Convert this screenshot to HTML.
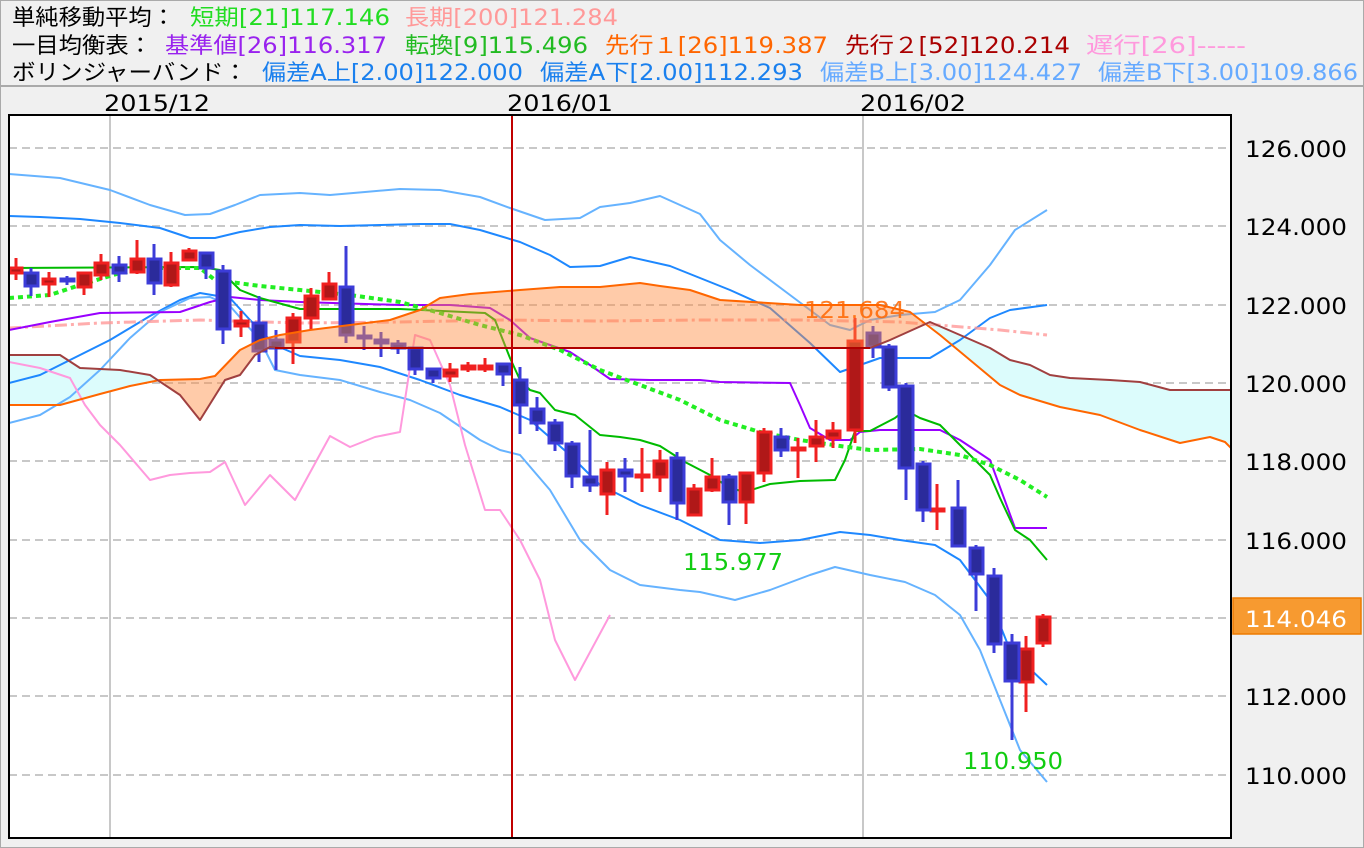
<!DOCTYPE html>
<html><head><meta charset="utf-8"><style>
html,body{margin:0;padding:0;background:#f0f0f0}
svg{display:block}
text{font-family:"DejaVu Sans","Liberation Sans","Noto Sans CJK JP",sans-serif}
</style></head><body>
<svg width="1364" height="848" viewBox="0 0 1364 848" xmlns="http://www.w3.org/2000/svg">
<rect x="0" y="0" width="1364" height="848" fill="#f0f0f0"/>
<rect x="0.5" y="0.5" width="1363" height="847" fill="none" stroke="#aaa"/>
<line x1="0" y1="86" x2="1364" y2="86" stroke="#aaa" stroke-width="2"/>
<g font-size="22">
<text x="12" y="25" fill="#000" textLength="163" lengthAdjust="spacingAndGlyphs">単純移動平均：</text>
<text x="190" y="25" fill="#22dd22" textLength="200" lengthAdjust="spacingAndGlyphs">短期[21]117.146</text>
<text x="405" y="25" fill="#ff9999" textLength="213" lengthAdjust="spacingAndGlyphs">長期[200]121.284</text>
<text x="12" y="53" fill="#000" textLength="140" lengthAdjust="spacingAndGlyphs">一目均衡表：</text>
<text x="165" y="53" fill="#9922ee" textLength="222" lengthAdjust="spacingAndGlyphs">基準値[26]116.317</text>
<text x="405" y="53" fill="#22bb22" textLength="183" lengthAdjust="spacingAndGlyphs">転換[9]115.496</text>
<text x="605" y="53" fill="#ff6600" textLength="223" lengthAdjust="spacingAndGlyphs">先行１[26]119.387</text>
<text x="845" y="53" fill="#aa0000" textLength="225" lengthAdjust="spacingAndGlyphs">先行２[52]120.214</text>
<text x="1086" y="53" fill="#ff99dd" textLength="160" lengthAdjust="spacingAndGlyphs">遅行[26]-----</text>
<text x="12" y="80" fill="#000" textLength="235" lengthAdjust="spacingAndGlyphs">ボリンジャーバンド：</text>
<text x="262" y="80" fill="#1a80ee" textLength="261" lengthAdjust="spacingAndGlyphs">偏差A上[2.00]122.000</text>
<text x="540" y="80" fill="#1a80ee" textLength="263" lengthAdjust="spacingAndGlyphs">偏差A下[2.00]112.293</text>
<text x="820" y="80" fill="#66aaff" textLength="262" lengthAdjust="spacingAndGlyphs">偏差B上[3.00]124.427</text>
<text x="1098" y="80" fill="#66aaff" textLength="260" lengthAdjust="spacingAndGlyphs">偏差B下[3.00]109.866</text>
<text x="104" y="111" fill="#000" textLength="106" lengthAdjust="spacingAndGlyphs">2015/12</text>
<text x="507" y="111" fill="#000" textLength="106" lengthAdjust="spacingAndGlyphs">2016/01</text>
<text x="860" y="111" fill="#000" textLength="106" lengthAdjust="spacingAndGlyphs">2016/02</text>
</g>
<rect x="9" y="115" width="1222" height="723" fill="#fff"/>
<defs>
<clipPath id="plot"><rect x="9" y="115" width="1222" height="723"/></clipPath>
<clipPath id="aboveB"><polygon points="9,355 60,355 80,368 120,370 150,375 180,395 200,420 225,380 240,375 255,355 270,347 280,348 600,348 870,348 890,340 930,322 960,335 990,348 1010,360 1030,365 1050,375 1070,378 1110,380 1140,382 1170,390 1231,390 1231,115 9,115"/></clipPath>
<clipPath id="aboveA"><polygon points="9,405 60,405 100,394 130,386 160,380 200,379 215,376 240,350 260,340 280,335 310,330 350,325 390,320 420,310 440,298 470,294 520,290 560,287 600,287 640,283 660,286 690,290 720,300 800,305 880,305 910,312 940,335 970,360 1000,385 1020,395 1060,407 1100,415 1140,430 1180,443 1210,437 1225,442 1231,448 1231,115 9,115"/></clipPath>
</defs>
<g clip-path="url(#plot)">
<g stroke="#c8c8c8" stroke-width="2" stroke-dasharray="8,5">
<line x1="9" y1="148" x2="1231" y2="148"/><line x1="9" y1="226" x2="1231" y2="226"/><line x1="9" y1="305" x2="1231" y2="305"/><line x1="9" y1="383" x2="1231" y2="383"/><line x1="9" y1="461" x2="1231" y2="461"/><line x1="9" y1="540" x2="1231" y2="540"/><line x1="9" y1="618" x2="1231" y2="618"/><line x1="9" y1="696" x2="1231" y2="696"/><line x1="9" y1="775" x2="1231" y2="775"/>
</g>
<line x1="110" y1="115" x2="110" y2="838" stroke="#c8c8c8" stroke-width="2"/>
<line x1="863" y1="115" x2="863" y2="838" stroke="#c8c8c8" stroke-width="2"/>
<!-- cyan cloud (B above A) -->
<polygon clip-path="url(#aboveA)" fill="#dcfcfc" points="9,355 60,355 80,368 120,370 150,375 180,395 200,420 225,380 240,375 255,355 270,347 280,348 600,348 870,348 890,340 930,322 960,335 990,348 1010,360 1030,365 1050,375 1070,378 1110,380 1140,382 1170,390 1231,390 1231,838 9,838"/>
<g fill="none" stroke-linejoin="round">
<polyline stroke="#66b3ff" stroke-width="2" points="9,174 60,178 110,190 150,205 185,215 210,214 235,205 260,195 300,193 330,195 365,192 400,189 440,190 480,197 510,208 545,220 580,218 600,207 630,203 660,196 700,214 720,240 750,265 790,295 830,325 850,330 870,320 900,315 935,312 960,300 990,265 1015,230 1047,210"/>
<polyline stroke="#1e88ff" stroke-width="2" points="9,216 40,217 80,219 120,223 160,228 190,238 215,238 240,232 270,227 300,225 340,226 380,225 420,224 450,224 480,230 520,242 550,255 570,267 600,266 630,257 670,266 700,278 730,290 770,308 810,343 840,372 860,365 880,358 905,358 930,358 960,340 990,318 1010,310 1047,305"/>
<polyline stroke="#1e88ff" stroke-width="2" points="9,383 40,375 80,355 110,340 150,316 180,300 200,293 230,298 250,320 275,345 300,356 340,360 380,367 420,380 460,395 500,407 530,420 570,455 600,485 640,505 680,520 720,540 760,543 800,540 840,532 870,535 900,540 935,545 960,560 990,600 1010,650 1047,685"/>
<polyline stroke="#66b3ff" stroke-width="2" points="9,423 40,415 70,397 100,370 130,338 160,312 190,298 210,297 230,306 260,340 275,370 300,375 340,380 380,392 410,400 440,413 480,440 500,450 520,455 550,490 580,540 610,570 640,585 680,590 700,592 735,600 770,590 810,575 835,567 870,575 905,582 935,595 960,615 980,650 1000,700 1020,750 1047,782"/>
<polyline stroke="#ff99dd" stroke-width="2" points="9,362 40,368 70,378 85,405 100,425 120,445 150,480 170,475 190,473 210,472 225,462 245,505 270,475 295,500 330,436 350,447 375,437 400,432 415,335 430,340 450,385 465,445 485,510 500,510 520,540 540,580 555,640 575,680 610,615"/>
<polyline stroke="#ff9999" stroke-width="3" stroke-dasharray="12,4,3,4" opacity="0.8" points="9,328 100,323 200,320 300,323 400,322 500,320 600,321 700,320 800,320 900,322 1000,330 1047,335"/>
<polyline stroke="#9900ff" stroke-width="2" points="9,330 50,322 100,313 180,312 210,302 230,297 260,300 300,302 400,305 450,305 490,308 510,320 530,338 570,352 590,365 610,379 650,380 700,380 720,382 790,383 800,405 810,428 830,440 850,440 860,432 880,430 940,430 960,440 990,460 1015,528 1047,528"/>
<polyline stroke="#00bb00" stroke-width="2" points="9,268 200,267 220,270 240,290 260,298 300,309 400,309 485,313 495,320 510,358 520,380 530,390 540,393 555,410 575,415 600,435 620,437 640,440 660,446 685,462 710,475 730,488 745,492 770,484 800,481 835,480 845,460 855,431 870,431 895,418 905,410 920,418 940,425 960,445 975,460 990,475 1000,498 1015,530 1030,540 1047,560"/>
<polyline stroke="#22ee22" stroke-width="4" stroke-dasharray="5,4" points="9,298 50,295 80,285 120,273 150,268 200,268 215,280 260,286 300,290 350,295 400,302 440,313 480,325 520,335 560,350 600,370 640,385 680,400 720,420 760,432 800,440 840,446 870,450 920,449 960,455 990,465 1020,480 1047,497"/>
</g>
<!-- candles -->
<g stroke-width="3">
<g stroke="#f02020" fill="#b01818">
<line x1="16" y1="258" x2="16" y2="280"/><rect x="10" y="268" width="12" height="5"/>
<line x1="49" y1="272" x2="49" y2="297"/><rect x="43" y="279" width="12" height="5"/>
<line x1="84" y1="273" x2="84" y2="295"/><rect x="78" y="273" width="13" height="14"/>
<line x1="101" y1="254" x2="101" y2="280"/><rect x="95" y="263" width="13" height="12"/>
<line x1="137" y1="240" x2="137" y2="274"/><rect x="131" y="259" width="13" height="13"/>
<line x1="171" y1="252" x2="171" y2="287"/><rect x="165" y="263" width="13" height="22"/>
<line x1="189" y1="248" x2="189" y2="261"/><rect x="183" y="251" width="13" height="9"/>
<line x1="241" y1="311" x2="241" y2="337"/><rect x="235" y="321" width="13" height="5"/>
<line x1="293" y1="313" x2="293" y2="364"/><rect x="287" y="318" width="13" height="24"/>
<line x1="311" y1="288" x2="311" y2="330"/><rect x="305" y="296" width="13" height="22"/>
<line x1="329" y1="272" x2="329" y2="300"/><rect x="323" y="284" width="13" height="15"/>
<line x1="450" y1="363" x2="450" y2="382"/><rect x="444" y="370" width="13" height="6"/>
<line x1="468" y1="362" x2="468" y2="372"/><rect x="462" y="366" width="13" height="3"/>
<line x1="485" y1="358" x2="485" y2="372"/><rect x="479" y="366" width="13" height="3"/>
<line x1="607" y1="462" x2="607" y2="515"/><rect x="601" y="470" width="13" height="24"/>
<line x1="642" y1="448" x2="642" y2="492"/><rect x="636" y="475" width="13" height="2"/>
<line x1="660" y1="450" x2="660" y2="492"/><rect x="654" y="461" width="13" height="16"/>
<line x1="694" y1="484" x2="694" y2="515"/><rect x="688" y="489" width="13" height="26"/>
<line x1="712" y1="458" x2="712" y2="492"/><rect x="706" y="477" width="13" height="13"/>
<line x1="746" y1="473" x2="746" y2="524"/><rect x="740" y="473" width="13" height="29"/>
<line x1="764" y1="428" x2="764" y2="482"/><rect x="758" y="432" width="13" height="41"/>
<line x1="798" y1="438" x2="798" y2="478"/><rect x="792" y="448" width="13" height="2"/>
<line x1="816" y1="420" x2="816" y2="462"/><rect x="810" y="437" width="13" height="9"/>
<line x1="833" y1="422" x2="833" y2="448"/><rect x="827" y="431" width="13" height="7"/>
<line x1="855" y1="318" x2="855" y2="443"/><rect x="848" y="341" width="14" height="89"/>
<line x1="937" y1="484" x2="937" y2="530"/><rect x="931" y="509" width="13" height="2"/>
<line x1="1026" y1="636" x2="1026" y2="712"/><rect x="1020" y="649" width="13" height="33"/>
<line x1="1043" y1="614" x2="1043" y2="647"/><rect x="1037" y="617" width="13" height="26"/>
</g>
<g stroke="#3c3cd8" fill="#2b2b9b">
<line x1="31" y1="268" x2="31" y2="296"/><rect x="25" y="273" width="13" height="13"/>
<line x1="67" y1="276" x2="67" y2="285"/><rect x="61" y="279" width="13" height="2"/>
<line x1="119" y1="256" x2="119" y2="282"/><rect x="113" y="265" width="13" height="8"/>
<line x1="154" y1="244" x2="154" y2="295"/><rect x="148" y="259" width="13" height="24"/>
<line x1="206" y1="253" x2="206" y2="279"/><rect x="200" y="253" width="13" height="15"/>
<line x1="223" y1="265" x2="223" y2="344"/><rect x="217" y="271" width="13" height="58"/>
<line x1="259" y1="296" x2="259" y2="362"/><rect x="253" y="323" width="13" height="28"/>
<line x1="276" y1="330" x2="276" y2="370"/><rect x="270" y="340" width="13" height="8"/>
<line x1="346" y1="246" x2="346" y2="343"/><rect x="340" y="287" width="13" height="48"/>
<line x1="364" y1="326" x2="364" y2="350"/><rect x="358" y="336" width="13" height="2"/>
<line x1="381" y1="332" x2="381" y2="357"/><rect x="375" y="340" width="13" height="3"/>
<line x1="398" y1="340" x2="398" y2="354"/><rect x="392" y="344" width="13" height="4"/>
<line x1="415" y1="347" x2="415" y2="375"/><rect x="409" y="348" width="13" height="21"/>
<line x1="433" y1="369" x2="433" y2="383"/><rect x="427" y="369" width="13" height="9"/>
<line x1="503" y1="364" x2="503" y2="386"/><rect x="497" y="364" width="13" height="10"/>
<line x1="520" y1="367" x2="520" y2="434"/><rect x="514" y="380" width="13" height="25"/>
<line x1="537" y1="397" x2="537" y2="431"/><rect x="531" y="409" width="13" height="14"/>
<line x1="555" y1="419" x2="555" y2="451"/><rect x="549" y="423" width="13" height="20"/>
<line x1="572" y1="441" x2="572" y2="488"/><rect x="566" y="444" width="13" height="32"/>
<line x1="590" y1="430" x2="590" y2="492"/><rect x="584" y="477" width="13" height="8"/>
<line x1="625" y1="458" x2="625" y2="492"/><rect x="619" y="470" width="13" height="6"/>
<line x1="677" y1="452" x2="677" y2="520"/><rect x="671" y="458" width="13" height="45"/>
<line x1="729" y1="474" x2="729" y2="525"/><rect x="723" y="477" width="13" height="25"/>
<line x1="781" y1="428" x2="781" y2="457"/><rect x="775" y="437" width="13" height="13"/>
<line x1="873" y1="326" x2="873" y2="358"/><rect x="867" y="333" width="13" height="14"/>
<line x1="889" y1="344" x2="889" y2="391"/><rect x="883" y="347" width="13" height="40"/>
<line x1="906" y1="383" x2="906" y2="500"/><rect x="899" y="386" width="14" height="82"/>
<line x1="923" y1="461" x2="923" y2="522"/><rect x="917" y="464" width="13" height="46"/>
<line x1="958" y1="480" x2="958" y2="546"/><rect x="952" y="508" width="13" height="38"/>
<line x1="976" y1="545" x2="976" y2="611"/><rect x="970" y="548" width="13" height="26"/>
<line x1="994" y1="568" x2="994" y2="653"/><rect x="988" y="576" width="13" height="68"/>
<line x1="1012" y1="634" x2="1012" y2="740"/><rect x="1005" y="643" width="14" height="38"/>
</g>
</g>
<!-- orange cloud (A above B), drawn translucent on top -->
<polygon clip-path="url(#aboveB)" fill="#ff8c40" fill-opacity="0.45" points="9,405 60,405 100,394 130,386 160,380 200,379 215,376 240,350 260,340 280,335 310,330 350,325 390,320 420,310 440,298 470,294 520,290 560,287 600,287 640,283 660,286 690,290 720,300 800,305 880,305 910,312 940,335 970,360 1000,385 1020,395 1060,407 1100,415 1140,430 1180,443 1210,437 1225,442 1231,448 1231,838 9,838"/>
<g fill="none" stroke-linejoin="round" stroke-width="2">
<polyline stroke="#ff6600" points="9,405 60,405 100,394 130,386 160,380 200,379 215,376 240,350 260,340 280,335 310,330 350,325 390,320 420,310 440,298 470,294 520,290 560,287 600,287 640,283 660,286 690,290 720,300 800,305 880,305 910,312 940,335 970,360 1000,385 1020,395 1060,407 1100,415 1140,430 1180,443 1210,437 1225,442 1231,448"/>
<polyline stroke="#a04040" points="9,355 60,355 80,368 120,370 150,375 180,395 200,420 225,380 240,375 255,355 270,347 280,348 600,348 870,348 890,340 930,322 960,335 990,348 1010,360 1030,365 1050,375 1070,378 1110,380 1140,382 1170,390 1231,390"/>
</g>
<line x1="275" y1="348" x2="870" y2="348" stroke="#b00000" stroke-width="2"/>
<line x1="512" y1="115" x2="512" y2="838" stroke="#c00000" stroke-width="2"/>
<g font-size="23">
<text x="804" y="318" fill="#ff6600" fill-opacity="0.85" textLength="101" lengthAdjust="spacingAndGlyphs">121.684</text>
<text x="683" y="570" fill="#11cc11" textLength="100" lengthAdjust="spacingAndGlyphs">115.977</text>
<text x="963" y="769" fill="#11cc11" textLength="100" lengthAdjust="spacingAndGlyphs">110.950</text>
</g>
</g>
<rect x="9" y="115" width="1222" height="723" fill="none" stroke="#000" stroke-width="2"/>
<g font-size="22" fill="#000">
<text x="1245" y="157" textLength="102" lengthAdjust="spacingAndGlyphs">126.000</text>
<text x="1245" y="235" textLength="102" lengthAdjust="spacingAndGlyphs">124.000</text>
<text x="1245" y="314" textLength="102" lengthAdjust="spacingAndGlyphs">122.000</text>
<text x="1245" y="392" textLength="102" lengthAdjust="spacingAndGlyphs">120.000</text>
<text x="1245" y="470" textLength="102" lengthAdjust="spacingAndGlyphs">118.000</text>
<text x="1245" y="549" textLength="102" lengthAdjust="spacingAndGlyphs">116.000</text>
<text x="1245" y="705" textLength="102" lengthAdjust="spacingAndGlyphs">112.000</text>
<text x="1245" y="784" textLength="102" lengthAdjust="spacingAndGlyphs">110.000</text>
</g>
<rect x="1233" y="598" width="128" height="36" fill="#f79a30" stroke="#ee7a00" stroke-width="1.5"/>
<text x="1245" y="627" font-size="22" fill="#fff" textLength="102" lengthAdjust="spacingAndGlyphs">114.046</text>
</svg>
</body></html>
